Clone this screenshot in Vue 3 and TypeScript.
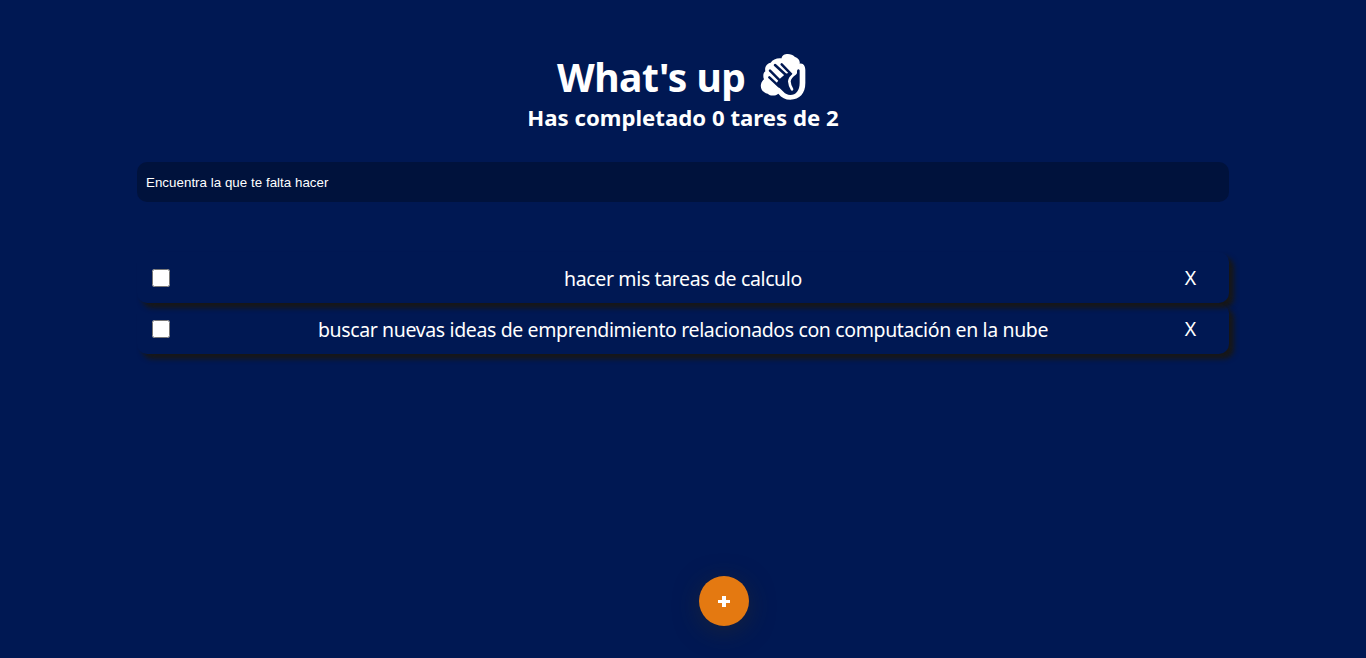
<script setup lang="ts">
import { computed, ref } from 'vue'

interface Task {
  text: string
  completed: boolean
}

const query = ref('')
const tasks = ref<Task[]>([
  { text: 'hacer mis tareas de calculo', completed: false },
  { text: 'buscar nuevas ideas de emprendimiento relacionados con computación en la nube', completed: false },
])

const completed = computed(() => tasks.value.filter((t) => t.completed).length)
const visible = computed(() => tasks.value.filter((t) => t.text.includes(query.value.toLowerCase())))

function remove(task: Task) {
  tasks.value = tasks.value.filter((t) => t !== task)
}
</script>

<template>
  <main class="app">
    <header class="head">
      <h1 class="title">
        <span class="greeting">What's up</span>
        <svg class="wave" viewBox="0 0 168 168" aria-hidden="true">
          <path
            class="solid"
            d="M80 31C80 16 108 14 119 26C129 30 136 37 134 47C145 44 151 54 151 66V105C151 136 134 155 106 155C91 155 80 149 70 137C62 144 46 145 38 137C24 135 15 122 18 109C19 102 23 98 27 94C23 84 25 74 31 70C28 56 36 46 47 44C53 34 67 29 80 31Z"
          />
          <path class="palm" d="M62 109L73 94L91 78L106 73L113 82L126 76V68Q130 60 134 67V104C134 127 123 141 106 141C97 141 91 137 86 132Z" />
          <path class="fingers" d="M43 88L72 115M45 68L80 103M60 51L96 84M80 49L109 79" />
          <path class="crease" d="M121 56V76Q104 88 103 100Q104 113 111 124" />
        </svg>
      </h1>
      <h2 class="counter">Has completado {{ completed }} tares de {{ tasks.length }}</h2>
    </header>
    <input v-model="query" class="search" placeholder="Encuentra la que te falta hacer" />
    <ul class="list">
      <li v-for="task in visible" :key="task.text" class="item">
        <input v-model="task.completed" type="checkbox" class="check" />
        <p class="text">{{ task.text }}</p>
        <span class="remove" @click="remove(task)">X</span>
      </li>
    </ul>
    <button class="add" type="button" aria-label="Agregar">
      <svg viewBox="0 0 14 12" aria-hidden="true"><path d="M5 0h4v4h4v3H9v4H5V7H1V4h4z" /></svg>
    </button>
  </main>
</template>

<style>
body {
  background: #001853;
}
</style>

<style scoped>
.app {
  box-sizing: border-box;
  height: 658px;
  padding: 53px 137px 0;
  overflow: hidden;
  background: #001853;
  color: #fff;
  font-family: 'Segoe UI', 'Noto Sans', 'Open Sans', sans-serif;
}
.head {
  height: 109px;
}
.title {
  display: flex;
  justify-content: center;
  height: 48px;
  margin: 0;
  font-size: 39px;
  line-height: 48px;
}
.greeting {
  letter-spacing: -0.5px;
  white-space: nowrap;
}
.wave {
  width: 56px;
  height: 56px;
  margin: -5px -2px 0 9.5px;
}
.solid {
  fill: #fff;
}
.palm {
  fill: #001853;
}
.fingers,
.crease {
  fill: none;
  stroke: #001853;
  stroke-width: 7.5;
  stroke-linecap: round;
  stroke-linejoin: round;
}
.crease {
  stroke: #fff;
  stroke-width: 8;
}
.counter {
  margin: 0;
  font-size: 22.2px;
  line-height: 34px;
  text-align: center;
}
.search {
  display: block;
  box-sizing: border-box;
  width: 100%;
  height: 40px;
  padding: 0 9px;
  border: 0;
  border-radius: 10px;
  outline: 0;
  background: #00123c;
  color: #fff;
  font: 13.333px 'Liberation Sans', sans-serif;
  letter-spacing: 0.03px;
}
.search::placeholder {
  color: #fff;
}
.list {
  margin: 50px 0 0;
  padding: 0;
  list-style: none;
}
.item {
  display: flex;
  align-items: center;
  box-sizing: border-box;
  height: 51px;
  padding: 0 32px 0 15px;
  border-radius: 10px;
  box-shadow: 5px 5px 5px #171717;
}
.check {
  flex: none;
  width: 18px;
  height: 18px;
  margin: 0;
}
.text {
  flex: 1;
  margin: 0;
  padding: 2px 0 0 12px;
  font-size: 19.5px;
  line-height: 26px;
  letter-spacing: -0.37px;
  text-align: center;
  white-space: nowrap;
}
.remove {
  flex: none;
  width: 13px;
  font-size: 19.5px;
  line-height: 26px;
  text-align: center;
  cursor: pointer;
}
.add {
  position: fixed;
  bottom: 32px;
  left: 699px;
  display: flex;
  align-items: center;
  justify-content: center;
  width: 50px;
  height: 50px;
  padding: 1px 0 0;
  border: 0;
  border-radius: 50%;
  background: #e47911;
  box-shadow: 0 5px 25px rgba(45, 43, 35, 0.5);
}
.add svg {
  width: 14px;
  height: 12px;
  fill: #fff;
}
</style>
